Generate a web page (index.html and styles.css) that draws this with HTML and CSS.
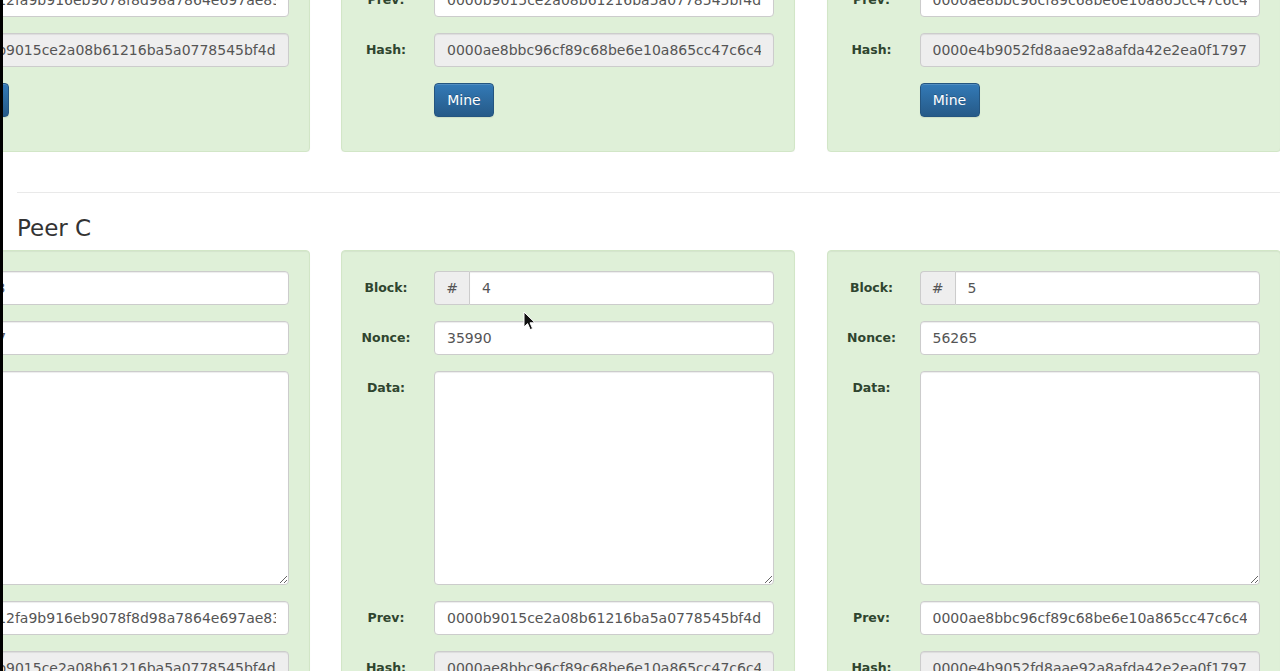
FILE: index.html
```html
<!DOCTYPE html>
<html lang="en">
<head>
<meta charset="utf-8">
<title>Blockchain Demo – Distributed</title>
<link rel="stylesheet" href="styles.css">
</head>
<body>
<main class="page">

  <section class="peer">
    <h3 class="peer-title">Peer B</h3>
    <div class="chain">
      <div class="track">
        <form class="block">
          <label class="lbl">Block:</label>
          <div class="group"><span class="addon">#</span><input class="field field-grouped" type="text" value="3"></div>
          <label class="lbl">Nonce:</label>
          <input class="field" type="text" value="13207">
          <label class="lbl">Data:</label>
          <textarea class="field data"></textarea>
          <label class="lbl">Prev:</label>
          <input class="field" type="text" value="000012fa9b916eb9078f8d98a7864e697ae83ed54f5146bd84452cdafd043c19">
          <label class="lbl">Hash:</label>
          <input class="field" type="text" readonly value="0000b9015ce2a08b61216ba5a0778545bf4ddd7ceb7bbd85dd8062b29a9140bf">
          <button class="mine" type="button">Mine</button>
        </form>
        <form class="block">
          <label class="lbl">Block:</label>
          <div class="group"><span class="addon">#</span><input class="field field-grouped" type="text" value="4"></div>
          <label class="lbl">Nonce:</label>
          <input class="field" type="text" value="35990">
          <label class="lbl">Data:</label>
          <textarea class="field data"></textarea>
          <label class="lbl">Prev:</label>
          <input class="field" type="text" value="0000b9015ce2a08b61216ba5a0778545bf4ddd7ceb7bbd85dd8062b29a9140bf">
          <label class="lbl">Hash:</label>
          <input class="field" type="text" readonly value="0000ae8bbc96cf89c68be6e10a865cc47c6c48a9ebec3c6cad729646cefaef83">
          <button class="mine" type="button">Mine</button>
        </form>
        <form class="block">
          <label class="lbl">Block:</label>
          <div class="group"><span class="addon">#</span><input class="field field-grouped" type="text" value="5"></div>
          <label class="lbl">Nonce:</label>
          <input class="field" type="text" value="56265">
          <label class="lbl">Data:</label>
          <textarea class="field data"></textarea>
          <label class="lbl">Prev:</label>
          <input class="field" type="text" value="0000ae8bbc96cf89c68be6e10a865cc47c6c48a9ebec3c6cad729646cefaef83">
          <label class="lbl">Hash:</label>
          <input class="field" type="text" readonly value="0000e4b9052fd8aae92a8afda42e2ea0f17972ea31c3ce57fb43a3b1ae6f9fbc">
          <button class="mine" type="button">Mine</button>
        </form>
      </div>
    </div>
  </section>

  <hr class="divider">

  <section class="peer">
    <h3 class="peer-title">Peer C</h3>
    <div class="chain">
      <div class="track">
        <form class="block">
          <label class="lbl">Block:</label>
          <div class="group"><span class="addon">#</span><input class="field field-grouped" type="text" value="3"></div>
          <label class="lbl">Nonce:</label>
          <input class="field" type="text" value="13207">
          <label class="lbl">Data:</label>
          <textarea class="field data"></textarea>
          <label class="lbl">Prev:</label>
          <input class="field" type="text" value="000012fa9b916eb9078f8d98a7864e697ae83ed54f5146bd84452cdafd043c19">
          <label class="lbl">Hash:</label>
          <input class="field" type="text" readonly value="0000b9015ce2a08b61216ba5a0778545bf4ddd7ceb7bbd85dd8062b29a9140bf">
          <button class="mine" type="button">Mine</button>
        </form>
        <form class="block block-pointer">
          <label class="lbl">Block:</label>
          <div class="group"><span class="addon">#</span><input class="field field-grouped" type="text" value="4"></div>
          <label class="lbl">Nonce:</label>
          <input class="field" type="text" value="35990">
          <label class="lbl">Data:</label>
          <textarea class="field data"></textarea>
          <label class="lbl">Prev:</label>
          <input class="field" type="text" value="0000b9015ce2a08b61216ba5a0778545bf4ddd7ceb7bbd85dd8062b29a9140bf">
          <label class="lbl">Hash:</label>
          <input class="field" type="text" readonly value="0000ae8bbc96cf89c68be6e10a865cc47c6c48a9ebec3c6cad729646cefaef83">
          <button class="mine" type="button">Mine</button>
          <svg class="cursor" width="13" height="20" viewBox="0 0 13 20" aria-hidden="true">
            <path d="M1 1 L1 16 L4.6 12.6 L7.2 18.6 L9.6 17.6 L7 11.8 L12 11.8 Z" fill="#111" stroke="#fff" stroke-width="1"/>
          </svg>
        </form>
        <form class="block">
          <label class="lbl">Block:</label>
          <div class="group"><span class="addon">#</span><input class="field field-grouped" type="text" value="5"></div>
          <label class="lbl">Nonce:</label>
          <input class="field" type="text" value="56265">
          <label class="lbl">Data:</label>
          <textarea class="field data"></textarea>
          <label class="lbl">Prev:</label>
          <input class="field" type="text" value="0000ae8bbc96cf89c68be6e10a865cc47c6c48a9ebec3c6cad729646cefaef83">
          <label class="lbl">Hash:</label>
          <input class="field" type="text" readonly value="0000e4b9052fd8aae92a8afda42e2ea0f17972ea31c3ce57fb43a3b1ae6f9fbc">
          <button class="mine" type="button">Mine</button>
        </form>
      </div>
    </div>
  </section>

</main>
</body>
</html>
```

FILE: styles.css
```css
html {
  background: #fff;
}

body {
  margin: 0;
  border-left: 3px solid #000;
  background: #fff;
  font-family: "DejaVu Sans", Verdana, sans-serif;
  color: #333;
  overflow: hidden;
}

.page {
  margin-top: -425px;
  padding-bottom: 40px;
}

.peer-title {
  margin: 22px 0 9px 14px;
  font-size: 23px;
  font-weight: normal;
  line-height: 26px;
  color: #333;
}

.divider {
  margin: 40px 0 0 14px;
  height: 0;
  border: 0;
  border-top: 1px solid #e9e9e9;
}

.chain {
  overflow: hidden;
}

.track {
  display: flex;
  gap: 31.5px;
  margin-left: -147.5px;
}

.block {
  flex: 0 0 454px;
  box-sizing: border-box;
  margin: 0;
  display: grid;
  grid-template-columns: 50px 340px;
  column-gap: 23px;
  row-gap: 16px;
  align-items: start;
  padding: 20px 20px 34px 19px;
  background: #dff0d8;
  border: 1px solid #d2e6c7;
  border-radius: 4px;
  box-shadow: inset 0 1px 1px rgba(0, 0, 0, 0.05), 0 1px 1px rgba(0, 0, 0, 0.04);
}

.block-pointer {
  position: relative;
}

.lbl {
  font-size: 12.5px;
  font-weight: bold;
  line-height: 34px;
  text-align: center;
  white-space: nowrap;
  color: #2f452f;
}

.field {
  box-sizing: border-box;
  display: block;
  width: 100%;
  height: 34px;
  margin: 0;
  padding: 6px 12px;
  font-family: "DejaVu Sans", Verdana, sans-serif;
  font-size: 14px;
  line-height: 20px;
  color: #555;
  background: #fff;
  border: 1px solid #ccc;
  border-radius: 4px;
  box-shadow: inset 0 1px 1px rgba(0, 0, 0, 0.075);
  outline: none;
}

.field[readonly] {
  background: #eee;
}

.data {
  height: 214px;
  resize: vertical;
}

.group {
  display: flex;
}

.addon {
  box-sizing: border-box;
  flex: 0 0 35px;
  height: 34px;
  font-size: 14px;
  line-height: 32px;
  text-align: center;
  color: #555;
  background: #eee;
  border: 1px solid #ccc;
  border-right: 0;
  border-radius: 4px 0 0 4px;
}

.field-grouped {
  flex: 1;
  width: auto;
  min-width: 0;
  border-radius: 0 4px 4px 0;
}

.mine {
  grid-column: 2;
  justify-self: start;
  width: 60px;
  height: 34px;
  padding: 0;
  font-family: "DejaVu Sans", Verdana, sans-serif;
  font-size: 14px;
  color: #fff;
  text-shadow: 0 -1px 0 rgba(0, 0, 0, 0.2);
  background: linear-gradient(to bottom, #337ab7 0%, #265a88 100%);
  border: 1px solid #245580;
  border-radius: 4px;
  box-shadow: inset 0 1px 0 rgba(255, 255, 255, 0.15), 0 1px 1px rgba(0, 0, 0, 0.075);
}

.cursor {
  position: absolute;
  left: 181px;
  top: 60px;
}
```
